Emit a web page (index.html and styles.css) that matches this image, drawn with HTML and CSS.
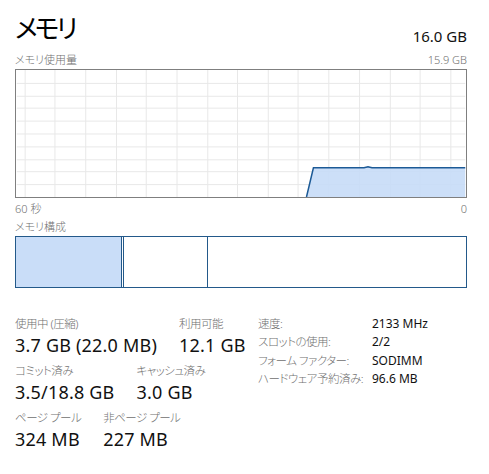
FILE: index.html
```html
<!DOCTYPE html>
<html lang="ja">
<head>
<meta charset="utf-8">
<link rel="stylesheet" href="styles.css">
</head>
<body>
<div class="panel">
  <div class="head">
    <div class="title">メモリ</div>
    <div class="total">16.0 GB</div>
  </div>
  <div class="caption">
    <span>メモリ使用量</span>
    <span>15.9 GB</span>
  </div>
  <div class="graph">
    <svg width="452" height="128" viewBox="0 0 452 128">
      <g stroke="#e8e8e8" stroke-width="1">
        <line x1="8.5" y1="0" x2="8.5" y2="128"/>
        <line x1="38.5" y1="0" x2="38.5" y2="128"/>
        <line x1="69.5" y1="0" x2="69.5" y2="128"/>
        <line x1="100.5" y1="0" x2="100.5" y2="128"/>
        <line x1="130.5" y1="0" x2="130.5" y2="128"/>
        <line x1="161.5" y1="0" x2="161.5" y2="128"/>
        <line x1="192.5" y1="0" x2="192.5" y2="128"/>
        <line x1="222.5" y1="0" x2="222.5" y2="128"/>
        <line x1="253.5" y1="0" x2="253.5" y2="128"/>
        <line x1="283.5" y1="0" x2="283.5" y2="128"/>
        <line x1="314.5" y1="0" x2="314.5" y2="128"/>
        <line x1="345.5" y1="0" x2="345.5" y2="128"/>
        <line x1="376.5" y1="0" x2="376.5" y2="128"/>
        <line x1="406.5" y1="0" x2="406.5" y2="128"/>
        <line x1="437.5" y1="0" x2="437.5" y2="128"/>
        <line x1="0" y1="13.5" x2="452" y2="13.5"/>
        <line x1="0" y1="26.5" x2="452" y2="26.5"/>
        <line x1="0" y1="38.5" x2="452" y2="38.5"/>
        <line x1="0" y1="51.5" x2="452" y2="51.5"/>
        <line x1="0" y1="64.5" x2="452" y2="64.5"/>
        <line x1="0" y1="77.5" x2="452" y2="77.5"/>
        <line x1="0" y1="90.5" x2="452" y2="90.5"/>
        <line x1="0" y1="102.5" x2="452" y2="102.5"/>
        <line x1="0" y1="115.5" x2="452" y2="115.5"/>
      </g>
      <polygon points="292,128 299,98.5 350,98.5 354,97.5 358,98.5 452,98.5 452,128" fill="#c6dcf7" fill-opacity="0.9"/>
      <polyline points="292,128 299,98.5 350,98.5 354,97.5 358,98.5 452,98.5" fill="none" stroke="#1c5a96" stroke-width="1.5"/>
    </svg>
  </div>
  <div class="axis">
    <span>60 秒</span>
    <span>0</span>
  </div>
  <div class="caption comp-cap"><span>メモリ構成</span></div>
  <div class="comp">
    <div class="seg inuse"></div>
    <div class="seg modified"></div>
    <div class="seg standby"></div>
    <div class="seg free"></div>
  </div>
  <div class="stats">
    <div class="left">
      <div class="row">
        <div class="stat"><div class="lbl">使用中 (圧縮)</div><div class="val">3.7 GB (22.0 MB)</div></div>
        <div class="stat"><div class="lbl">利用可能</div><div class="val">12.1 GB</div></div>
      </div>
      <div class="row">
        <div class="stat"><div class="lbl">コミット済み</div><div class="val">3.5/18.8 GB</div></div>
        <div class="stat"><div class="lbl">キャッシュ済み</div><div class="val">3.0 GB</div></div>
      </div>
      <div class="row">
        <div class="stat"><div class="lbl">ページ プール</div><div class="val">324 MB</div></div>
        <div class="stat"><div class="lbl">非ページ プール</div><div class="val">227 MB</div></div>
      </div>
    </div>
    <div class="right">
      <div class="k">速度:</div><div class="v">2133 MHz</div>
      <div class="k">スロットの使用:</div><div class="v">2/2</div>
      <div class="k">フォーム ファクター:</div><div class="v">SODIMM</div>
      <div class="k">ハードウェア予約済み:</div><div class="v">96.6 MB</div>
    </div>
  </div>
</div>
</body>
</html>
```

FILE: styles.css
```css
* { box-sizing: border-box; }
html, body {
  margin: 0;
  padding: 0;
  background: #ffffff;
}
body {
  font-family: "Noto Sans", "Noto Sans CJK JP", sans-serif;
  font-feature-settings: "palt";
  color: #1a1a1a;
  font-weight: 300;
}
.panel {
  width: 489px;
  height: 474px;
  padding: 11px 22px 0 15px;
  overflow: hidden;
}
.head {
  display: flex;
  justify-content: space-between;
  align-items: flex-start;
  height: 41px;
}
.title {
  font-size: 26px;
  line-height: 34px;
  font-weight: 400;
  color: #000;
  letter-spacing: -3px;
}
.total {
  font-size: 15px;
  line-height: 20px;
  margin-top: 15px;
  color: #111;
  font-weight: 400;
}
.caption {
  display: flex;
  justify-content: space-between;
  font-size: 11px;
  line-height: 16px;
  color: #707070;
  height: 17px;
}
.graph {
  width: 452px;
  height: 129px;
  border: 1px solid #7f7f7f;
  background: #fff;
}
.graph svg {
  display: block;
  width: 450px;
  height: 127px;
}
.axis {
  display: flex;
  justify-content: space-between;
  font-size: 11px;
  line-height: 16px;
  color: #707070;
  height: 20px;
  padding-top: 3px;
}
.comp-cap {
  height: 18px;
  padding-top: 1px;
}
.comp {
  display: flex;
  width: 452px;
  height: 52px;
  border: 1px solid #23598a;
}
.seg { height: 100%; }
.inuse {
  width: 106px;
  background: #c9ddf8;
  border-right: 1px solid #23598a;
}
.modified {
  width: 2px;
  border-right: 1px solid #23598a;
}
.standby {
  width: 84px;
  border-right: 1px solid #23598a;
}
.free { flex: 1; }
.stats {
  display: flex;
  margin-top: 27px;
}
.left {
  display: flex;
  flex-direction: column;
  gap: 4px;
  width: 243px;
}
.row {
  display: flex;
  gap: 22px;
}
.lbl {
  font-size: 11.5px;
  line-height: 17px;
  color: #707070;
  white-space: nowrap;
  letter-spacing: -0.5px;
}
.val {
  font-size: 18px;
  line-height: 26px;
  color: #111;
  white-space: nowrap;
  font-weight: 400;
  letter-spacing: 0.2px;
}
.right {
  display: grid;
  grid-template-columns: 114px auto;
  grid-auto-rows: 18.3px;
  font-size: 11.5px;
  line-height: 18px;
  align-content: start;
}
.k { color: #707070; white-space: nowrap; letter-spacing: -0.5px; }
.v { color: #111; white-space: nowrap; font-size: 12px; font-weight: 400; }
```
